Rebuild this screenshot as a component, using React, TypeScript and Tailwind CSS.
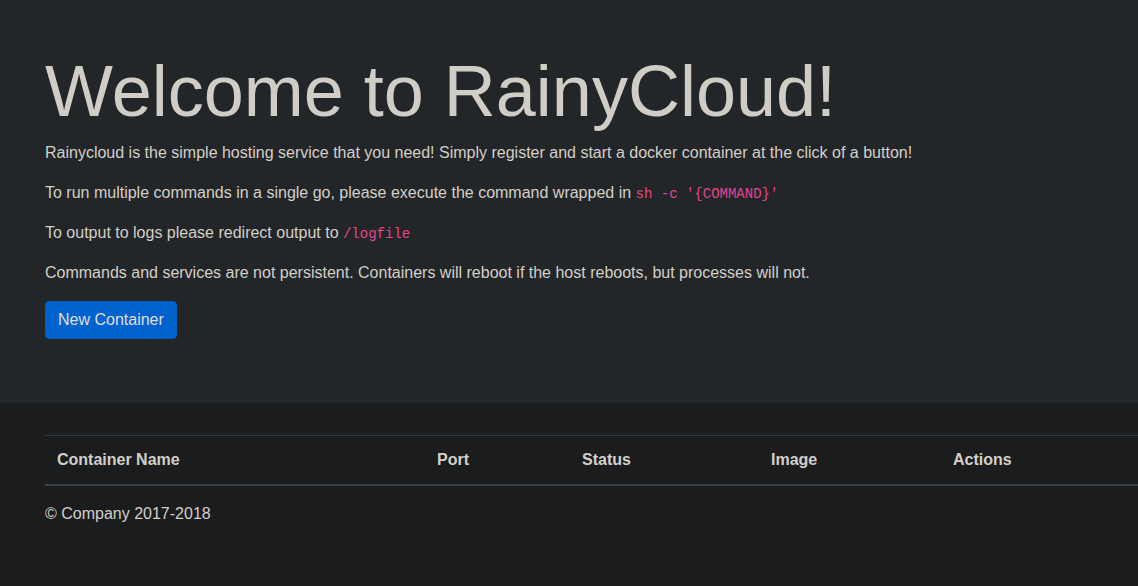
import React from 'react';

const columns = [
  { label: 'Container Name', width: 'w-[380px]' },
  { label: 'Port', width: 'w-[145px]' },
  { label: 'Status', width: 'w-[189px]' },
  { label: 'Image', width: 'w-[182px]' },
  { label: 'Actions', width: 'flex-1' },
];

const Code: React.FC<{ children: React.ReactNode }> = ({ children }) => (
  <code className="font-['Liberation_Mono',monospace] text-[14px] leading-none text-[#e3458f]">{children}</code>
);

const App: React.FC = () => {
  return (
    <div className="min-h-[586px] overflow-hidden bg-[#1b1c1e] font-['Liberation_Sans',Arial,sans-serif] text-[16px] leading-6 text-[#d3cfc9]">
      <section className="bg-[#232628] px-[45px] pt-[48px] pb-[64px]">
        <h1 className="mb-[7px] text-[72px] leading-[1.2] text-[#d0cdc6]">Welcome to RainyCloud!</h1>
        <p className="mb-4">
          Rainycloud is the simple hosting service that you need! Simply register and start a docker container at the click of a button!
        </p>
        <p className="mb-4">
          To run multiple commands in a single go, please execute the command wrapped in <Code>sh -c '{'{COMMAND}'}'</Code>
        </p>
        <p className="mb-4">
          To output to logs please redirect output to <Code>/logfile</Code>
        </p>
        <p className="mb-4">
          Commands and services are not persistent. Containers will reboot if the host reboots, but processes will not.
        </p>
        <button className="h-[38px] rounded-[4px] border border-[#005bbf] bg-[#0062cc] px-3 text-[16px] text-[#e0ddd8]">
          New Container
        </button>
      </section>

      <section className="pl-[45px] pt-8">
        <div className="mb-4 flex w-[1110px] border-t border-b-2 border-t-[#35393b] border-b-[#3c4244]">
          {columns.map((c) => (
            <div key={c.label} className={`${c.width} p-3 font-bold text-[#d3cfc9]`}>
              {c.label}
            </div>
          ))}
        </div>
        <p className="mb-4">© Company 2017-2018</p>
      </section>
    </div>
  );
};

export default App;
